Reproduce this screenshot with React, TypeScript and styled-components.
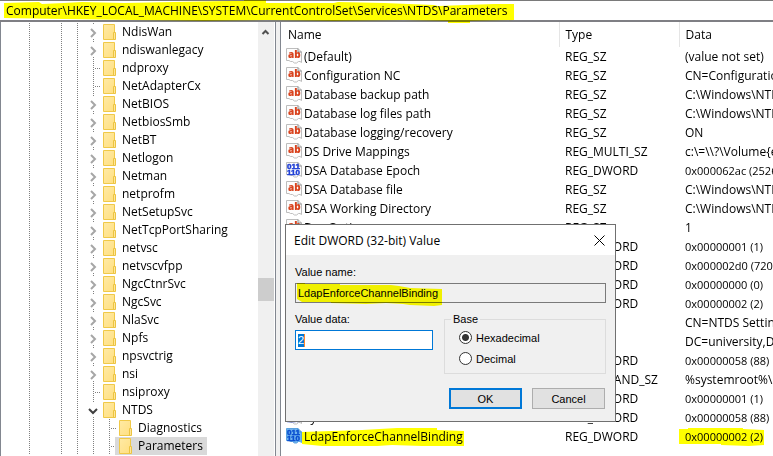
import React from "react";
import styled, { createGlobalStyle, css } from "styled-components";

const GlobalStyle = createGlobalStyle`
  * { box-sizing: border-box; }
  html, body { margin: 0; padding: 0; }
  body, button, input {
    font-family: "Open Sans", "Noto Sans", sans-serif;
    font-size: 12px;
    color: #000;
  }
`;

const Window = styled.main`
  display: flex;
  flex-direction: column;
  height: 100vh;
  overflow: hidden;
  background: #fff;
  position: relative;
`;

const AddressBar = styled.header`
  flex: none;
  height: 22px;
  padding-left: 6px;
  border-top: 1px solid #7a7a7a;
  border-bottom: 2px solid #7f7f84;
  line-height: 19px;
  white-space: nowrap;
`;

const Marked = styled.span`
  position: relative;
  display: inline-block;
`;

const MarkerShape = styled.svg<{ $left: number; $top: number }>`
  position: absolute;
  left: ${(p) => p.$left}px;
  top: ${(p) => p.$top}px;
  mix-blend-mode: multiply;
  pointer-events: none;
`;

type MarkerProps = {
  children: React.ReactNode;
  points: string;
  width: number;
  height: number;
  left: number;
  top: number;
};

function Marker({ children, points, width, height, left, top }: MarkerProps) {
  return (
    <Marked>
      {children}
      <MarkerShape $left={left} $top={top} width={width} height={height} aria-hidden="true">
        <polygon points={points} fill="#ffff00" />
      </MarkerShape>
    </Marked>
  );
}

const Panels = styled.div`
  flex: 1;
  min-height: 0;
  display: flex;
  background: #f0f0f0;
`;

const TreePane = styled.nav`
  flex: none;
  width: 276px;
  display: flex;
  overflow: hidden;
  background: #fff;
  border-left: 1px solid #828790;
  border-right: 1px solid #828790;
`;

const TreeList = styled.ul`
  flex: 1;
  min-width: 0;
  margin: 0;
  padding: 1px 0 0 20px;
  list-style: none;
`;

const TreeRow = styled.li`
  display: flex;
  height: 18px;
`;

const dots = css`
  background-image: linear-gradient(#808080 50%, transparent 50%);
  background-size: 1px 2px;
  background-repeat: repeat-y;
  background-position: 8px 0;
`;

const Guide = styled.span<{ $line: boolean }>`
  flex: none;
  width: 16px;
  ${(p) => p.$line && dots}
`;

const Branch = styled(Guide)`
  display: flex;
  align-items: center;
  &::after {
    content: "";
    margin-left: 10px;
    width: 6px;
    height: 1px;
    background: repeating-linear-gradient(90deg, #808080 0 1px, transparent 1px 2px);
  }
`;

const Expander = styled(Guide)`
  padding: 2px 0 2px 3px;
  svg { display: block; background: #fff; }
`;

const FolderSlot = styled.span`
  flex: none;
  width: 23px;
  padding: 1px 0 0 4px;
  svg { display: block; }
`;

const TreeLabel = styled.span<{ $selected: boolean }>`
  display: flex;
  margin-left: -2px;
  line-height: 17px;
  white-space: nowrap;
  padding-right: 4px;
  ${(p) => p.$selected && "background: #d9d9d9;"}
`;

function Folder() {
  return (
    <svg width="14" height="17" viewBox="0 0 14 17" aria-hidden="true">
      <defs>
        <linearGradient id="folder" x1="0" y1="0" x2="1" y2="1">
          <stop offset="0" stopColor="#ffeaa5" />
          <stop offset="1" stopColor="#ffdf80" />
        </linearGradient>
      </defs>
      <path d="M.5.5h11v15H.5z" fill="url(#folder)" stroke="#f0c948" />
      <path d="M10.5 8.500h2v7h-2z" fill="#ffe69a" stroke="#ecc441" />
    </svg>
  );
}

function Chevron({ open }: { open: boolean }) {
  return (
    <svg width="10" height="14" viewBox="0 0 10 14" fill="none" aria-hidden="true">
      {open ? (
        <path d="M1 6l4 4 4-4" stroke="#404040" strokeWidth="2" />
      ) : (
        <path d="M3 4l4 4-4 4" stroke="#a6a6a6" strokeWidth="2" />
      )}
    </svg>
  );
}

type Node = { name: string; kind: "closed" | "open" | "leaf" | "child"; selected?: boolean };

const nodes: Node[] = [
  { name: "NdisWan", kind: "closed" },
  { name: "ndiswanlegacy", kind: "closed" },
  { name: "ndproxy", kind: "leaf" },
  { name: "NetAdapterCx", kind: "leaf" },
  { name: "NetBIOS", kind: "closed" },
  { name: "NetbiosSmb", kind: "closed" },
  { name: "NetBT", kind: "closed" },
  { name: "Netlogon", kind: "closed" },
  { name: "Netman", kind: "closed" },
  { name: "netprofm", kind: "closed" },
  { name: "NetSetupSvc", kind: "closed" },
  { name: "NetTcpPortSharing", kind: "closed" },
  { name: "netvsc", kind: "closed" },
  { name: "netvscvfpp", kind: "closed" },
  { name: "NgcCtnrSvc", kind: "closed" },
  { name: "NgcSvc", kind: "closed" },
  { name: "NlaSvc", kind: "closed" },
  { name: "Npfs", kind: "closed" },
  { name: "npsvctrig", kind: "closed" },
  { name: "nsi", kind: "closed" },
  { name: "nsiproxy", kind: "leaf" },
  { name: "NTDS", kind: "open" },
  { name: "Diagnostics", kind: "child" },
  { name: "Parameters", kind: "child", selected: true },
];

function TreeItem({ node }: { node: Node }) {
  const { kind } = node;
  return (
    <TreeRow>
      <Guide $line />
      <Guide $line={false} />
      <Guide $line />
      <Guide $line />
      {kind === "child" && <Guide $line />}
      {kind === "leaf" || kind === "child" ? (
        <Branch $line />
      ) : (
        <Expander $line>
          <Chevron open={kind === "open"} />
        </Expander>
      )}
      <TreeLabel $selected={!!node.selected}>
        <FolderSlot>
          <Folder />
        </FolderSlot>
        {node.name}
      </TreeLabel>
    </TreeRow>
  );
}

const ScrollTrack = styled.div`
  flex: none;
  width: 16px;
  margin-right: 1px;
  background: #f0f0f0;
`;

const ScrollUp = styled.button`
  display: block;
  width: 16px;
  height: 17px;
  padding: 0;
  border: 0;
  background: none;
  svg { display: block; }
`;

const ScrollThumb = styled.div`
  height: 23px;
  margin-top: 239px;
  background: #cdcdcd;
`;

const ListPane = styled.section`
  flex: 1;
  min-width: 0;
  margin-left: 4px;
  overflow: hidden;
  background: #fff;
  border-left: 1px solid #828790;
`;

const Values = styled.table`
  width: 100%;
  table-layout: fixed;
  border-collapse: collapse;
  th, td {
    padding: 0 0 0 6px;
    overflow: hidden;
    white-space: nowrap;
    text-align: left;
    font-weight: 400;
  }
`;

const HeadRow = styled.tr`
  height: 25px;
  th + th { border-left: 1px solid #e5e5e5; }
  th:first-child { padding-left: 7px; }
`;

const NameCol = styled.col`
  width: 278px;
`;

const TypeCol = styled.col`
  width: 120px;
`;

const ValueRow = styled.tr`
  height: 19px;
  line-height: 19px;
  td:first-child { padding-left: 5px; }
`;

const DataCell = styled.td<{ $numeric?: boolean }>`
  font-size: ${(p) => (p.$numeric ? 11 : 12)}px;
`;

const NameCell = styled.div`
  display: flex;
  gap: 2px;
  height: 19px;
  svg { flex: none; }
`;

function ValueIcon({ binary, active }: { binary?: boolean; active?: boolean }) {
  const digits = active ? "#0a4fd0" : "#1f3fd6";
  return (
    <svg width="16" height="17" viewBox="0 0 16 17" aria-hidden="true">
      <path
        d="M.5 1.500h11.500l3.500 3.500v10.500l-1.500-1h-1.500l-2 1.500h-2l-2-1.500h-2l-1.500-1h-2.500z"
        fill={active ? "#6fb4ee" : "#fdfdfd"}
        stroke={active ? "#5aa2e0" : "#bdbdbd"}
      />
      <path d="M12 1.500v3.500h3.500" fill="none" stroke={active ? "#4a93d6" : "#8c8c8c"} />
      {binary ? (
        <g
          fill={digits}
          stroke={digits}
          strokeWidth="0.5"
          fontFamily="Liberation Sans"
          fontWeight="700"
          fontSize="8"
        >
          <text x="1" y="8">011</text>
          <text x="1" y="14">110</text>
        </g>
      ) : (
        <text x="2" y="11" fill="#d9431e" fontFamily="Open Sans" fontWeight="800" fontSize="10">
          ab
        </text>
      )}
    </svg>
  );
}

type Value = { name: string; type: string; data: string; binary?: boolean };

const values: Value[] = [
  { name: "(Default)", type: "REG_SZ", data: "(value not set)" },
  { name: "Configuration NC", type: "REG_SZ", data: "CN=Configuration" },
  { name: "Database backup path", type: "REG_SZ", data: "C:\\Windows\\NTDS" },
  { name: "Database log files path", type: "REG_SZ", data: "C:\\Windows\\NTDS" },
  { name: "Database logging/recovery", type: "REG_SZ", data: "ON" },
  { name: "DS Drive Mappings", type: "REG_MULTI_SZ", data: "c:\\=\\\\?\\Volume{e" },
  { name: "DSA Database Epoch", type: "REG_DWORD", data: "0x000062ac (2526", binary: true },
  { name: "DSA Database file", type: "REG_SZ", data: "C:\\Windows\\NTDS" },
  { name: "DSA Working Directory", type: "REG_SZ", data: "C:\\Windows\\NTDS" },
  { name: "Dsa Options", type: "REG_SZ", data: "1" },
  { name: "", type: "REG_DWORD", data: "0x00000001 (1)", binary: true },
  { name: "", type: "REG_DWORD", data: "0x000002d0 (720)", binary: true },
  { name: "", type: "REG_DWORD", data: "0x00000000 (0)", binary: true },
  { name: "", type: "REG_DWORD", data: "0x00000002 (2)", binary: true },
  { name: "", type: "", data: "CN=NTDS Settings" },
  { name: "", type: "", data: "DC=university,DC" },
  { name: "", type: "REG_DWORD", data: "0x00000058 (88)", binary: true },
  { name: "", type: "REG_EXPAND_SZ", data: "%systemroot%\\s" },
  { name: "", type: "REG_DWORD", data: "0x00000001 (1)", binary: true },
  { name: "System Schema", type: "REG_DWORD", data: "0x00000058 (88)", binary: true },
];

const Dialog = styled.section`
  position: absolute;
  left: 285px;
  top: 224px;
  width: 331px;
  background: #f0f0f0;
  border: 1px solid #707070;
  font-family: "Liberation Sans", Arial, sans-serif;
  font-size: 11px;
`;

const TitleBar = styled.div`
  display: flex;
  justify-content: space-between;
  align-items: center;
  height: 30px;
  padding: 0 9px 0 8px;
  background: #fff;
`;

const Title = styled.h1`
  margin: 0;
  font: 400 12px "Open Sans", sans-serif;
`;

const CloseButton = styled.button`
  display: grid;
  place-items: center;
  width: 14px;
  height: 14px;
  padding: 0;
  border: 0;
  background: none;
`;

const Form = styled.form`
  display: flex;
  flex-direction: column;
  padding: 10px 9px 12px;
`;

const Label = styled.label`
  display: block;
  line-height: 14px;
`;

const Field = styled.input<{ $active?: boolean }>`
  display: block;
  width: 100%;
  height: 20px;
  padding: 0 2px;
  border: 1px solid ${(p) => (p.$active ? "#0078d7" : "#7a7a7a")};
  outline: none;
  font: 11px "Liberation Sans", Arial, sans-serif;
  background: #f0f0f0;
  ${(p) =>
    p.$active &&
    css`
      color: #fff;
      background:
        linear-gradient(#ff8728, #ff8728) 8px 3px / 1px 13px no-repeat,
        linear-gradient(#0078d7, #0078d7) 2px 3px / 6px 13px no-repeat,
        #fff;
    `}
`;

const NameBox = styled.div`
  position: relative;
  margin-top: 4px;
`;

const Columns = styled.div`
  display: flex;
  justify-content: space-between;
  margin-top: 9px;
`;

const DataBox = styled.div`
  width: 138px;
  input { margin-top: 4px; }
`;

const Group = styled.fieldset`
  width: 162px;
  height: 62px;
  margin: 0;
  padding: 1px 0 0 14px;
  border: 1px solid #dcdcdc;
  legend { margin-left: -8px; padding: 0 2px; line-height: 14px; }
`;

const Choice = styled.label`
  display: flex;
  align-items: center;
  gap: 4px;
  height: 21px;
`;

const Radio = styled.input`
  appearance: none;
  width: 13px;
  height: 13px;
  margin: 0;
  border: 1px solid #333;
  border-radius: 50%;
  background: #fff;
  &:checked { background: radial-gradient(circle, #333 0 3px, #fff 4px); }
`;

const Actions = styled.div`
  display: flex;
  justify-content: flex-end;
  gap: 10px;
  margin-top: 14px;
  padding-right: 1px;
`;

const Action = styled.button<{ $primary?: boolean }>`
  width: 73px;
  height: 21px;
  padding: 0;
  border: ${(p) => (p.$primary ? "2px solid #0078d7" : "1px solid #adadad")};
  background: #e1e1e1;
  font: 11px "Liberation Sans", Arial, sans-serif;
`;

function EditDialog() {
  return (
    <Dialog role="dialog" aria-labelledby="dialog-title">
      <TitleBar>
        <Title id="dialog-title">Edit DWORD (32-bit) Value</Title>
        <CloseButton type="button" aria-label="Close">
          <svg width="11" height="11" viewBox="0 0 11 11" aria-hidden="true">
            <path d="M.5.5l10 10M10.5.5l-10 10" stroke="#000" />
          </svg>
        </CloseButton>
      </TitleBar>
      <Form onSubmit={(e) => e.preventDefault()}>
        <Label htmlFor="value-name">Value name:</Label>
        <NameBox>
          <Field id="value-name" readOnly defaultValue="LdapEnforceChannelBinding" />
          <MarkerShape $left={1} $top={-1} width={148} height={24} aria-hidden="true">
            <polygon
              points="1,1 9,1 9,2 44,2 44,3 95,3 103,4 114,6 146,7 146,23 138,24 114,23 107,22 90,21 70,22 35,21 35,20 6,20 1,17"
              fill="#ffff00"
            />
          </MarkerShape>
        </NameBox>
        <Columns>
          <DataBox>
            <Label htmlFor="value-data">Value data:</Label>
            <Field id="value-data" $active defaultValue="2" />
          </DataBox>
          <Group>
            <legend>Base</legend>
            <Choice>
              <Radio type="radio" name="base" defaultChecked />
              Hexadecimal
            </Choice>
            <Choice>
              <Radio type="radio" name="base" />
              Decimal
            </Choice>
          </Group>
        </Columns>
        <Actions>
          <Action type="submit" $primary>OK</Action>
          <Action type="button">Cancel</Action>
        </Actions>
      </Form>
    </Dialog>
  );
}

export default function App() {
  return (
    <Window>
      <GlobalStyle />
      <AddressBar>
        <Marker
          points="0,3 35,2 38,4 60,3 78,2 120,3 170,2 225,1 240,1 240,0 262,0 262,3 330,3 334,2 380,3 430,5 434,6 490,4 510,4 510,20 466,21 466,23 444,23 444,21 400,20 330,21 262,20 200,21 130,20 60,19 0,18"
          width={512}
          height={24}
          left={-2}
          top={-1}
        >
          Computer\HKEY_LOCAL_MACHINE\SYSTEM\CurrentControlSet\Services\NTDS\Parameters
        </Marker>
      </AddressBar>
      <Panels>
        <TreePane aria-label="Registry keys">
          <TreeList>
            {nodes.map((node) => (
              <TreeItem key={node.name} node={node} />
            ))}
          </TreeList>
          <ScrollTrack>
            <ScrollUp type="button" aria-label="Scroll up">
              <svg width="16" height="17" viewBox="0 0 16 17" fill="none" aria-hidden="true">
                <path d="M4.500 12l3-3 3 3" stroke="#505050" strokeWidth="2" />
              </svg>
            </ScrollUp>
            <ScrollThumb />
          </ScrollTrack>
        </TreePane>
        <ListPane>
          <Values>
            <colgroup>
              <NameCol />
              <TypeCol />
              <col />
            </colgroup>
            <thead>
              <HeadRow>
                <th>Name</th>
                <th>Type</th>
                <th>Data</th>
              </HeadRow>
            </thead>
            <tbody>
              {values.map((v, i) => (
                <ValueRow key={i}>
                  <td>
                    <NameCell>
                      <ValueIcon binary={v.binary} />
                      {v.name}
                    </NameCell>
                  </td>
                  <td>{v.type}</td>
                  <DataCell $numeric={v.binary}>{v.data}</DataCell>
                </ValueRow>
              ))}
              <ValueRow>
                <td>
                  <NameCell>
                    <ValueIcon binary active />
                    <Marker
                      points="0,5 30,4 60,3 95,1 135,1 135,3 162,4 162,19 120,19 90,18 60,20 20,21 20,19 0,17"
                      width={163}
                      height={22}
                      left={-2}
                      top={0}
                    >
                      LdapEnforceChannelBinding
                    </Marker>
                  </NameCell>
                </td>
                <td>REG_DWORD</td>
                <DataCell $numeric>
                  <Marker
                    points="0,2 9,2 9,1 64,1 64,2 85,3 85,18 70,19 42,18 42,17 0,17"
                    width={86}
                    height={20}
                    left={-6}
                    top={0}
                  >
                    0x00000002 (2)
                  </Marker>
                </DataCell>
              </ValueRow>
            </tbody>
          </Values>
        </ListPane>
      </Panels>
      <EditDialog />
    </Window>
  );
}
